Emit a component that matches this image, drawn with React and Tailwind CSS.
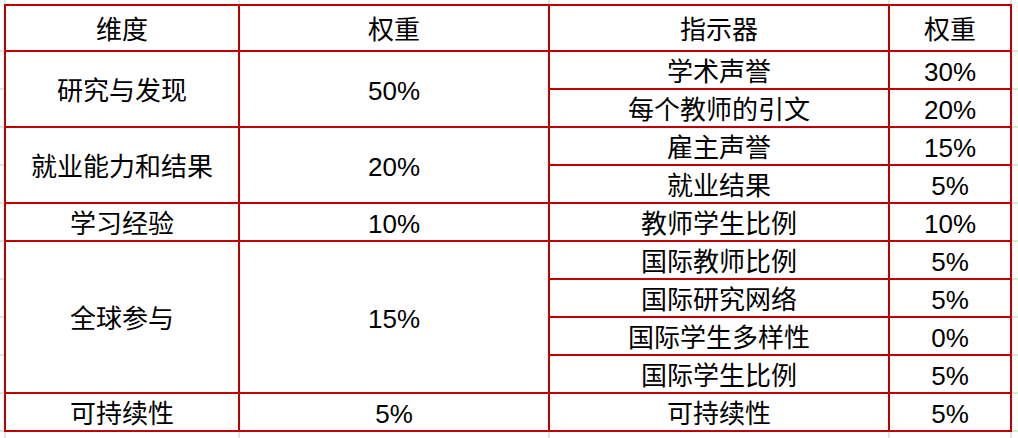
import React from "react";

const rows = [
  { dim: "研究与发现", weight: "50%", span: 2, items: [["学术声誉", "30%"], ["每个教师的引文", "20%"]] },
  { dim: "就业能力和结果", weight: "20%", span: 2, items: [["雇主声誉", "15%"], ["就业结果", "5%"]] },
  { dim: "学习经验", weight: "10%", span: 1, items: [["教师学生比例", "10%"]] },
  {
    dim: "全球参与",
    weight: "15%",
    span: 4,
    items: [
      ["国际教师比例", "5%"],
      ["国际研究网络", "5%"],
      ["国际学生多样性", "0%"],
      ["国际学生比例", "5%"],
    ],
  },
  { dim: "可持续性", weight: "5%", span: 1, items: [["可持续性", "5%"]] },
];

const spanClass = { 1: "row-span-1", 2: "row-span-2", 4: "row-span-4" };

const cell = "flex items-center justify-center pt-[3px] border-r-2 border-b-2 border-[#c00000]";

const colWidths = ["w-[236px] border-l-2", "w-[310px]", "w-[340px]", "w-[122px]"];

const HStrip = () => (
  <div className="flex h-full">
    {colWidths.map((w, i) => (
      <div key={i} className={`${w} h-full border-r-2 border-[#e3e3e3]`} />
    ))}
  </div>
);

const VStrip = () => (
  <div className="flex flex-col w-full">
    <div className="h-[48px] border-b-2 border-[#e3e3e3]" />
    {Array.from({ length: 10 }).map((_, i) => (
      <div key={i} className="h-[38px] border-b-2 border-[#e3e3e3]" />
    ))}
  </div>
);

export default function App() {
  return (
    <div
      className="w-[1018px] h-[438px] bg-white overflow-hidden grid grid-cols-[4px_1008px_6px] grid-rows-[4px_428px_6px] text-black"
      style={{ fontFamily: '"Liberation Sans", "Noto Sans CJK SC", sans-serif' }}
    >
      <div />
      <HStrip />
      <div />

      <VStrip />
      <div className="grid grid-cols-[234px_310px_340px_122px] grid-rows-[46px_repeat(10,38px)] border-l-2 border-t-2 border-[#c00000] text-[26px] leading-none">
        <div className={cell}>维度</div>
        <div className={cell}>权重</div>
        <div className={cell}>指示器</div>
        <div className={cell}>权重</div>
        {rows.map((r) => (
          <React.Fragment key={r.dim + r.weight}>
            <div className={`${cell} ${spanClass[r.span]}`}>{r.dim}</div>
            <div className={`${cell} ${spanClass[r.span]}`}>{r.weight}</div>
            {r.items.map(([name, w]) => (
              <React.Fragment key={name}>
                <div className={cell}>{name}</div>
                <div className={cell}>{w}</div>
              </React.Fragment>
            ))}
          </React.Fragment>
        ))}
      </div>
      <VStrip />

      <div />
      <HStrip />
      <div />
    </div>
  );
}
